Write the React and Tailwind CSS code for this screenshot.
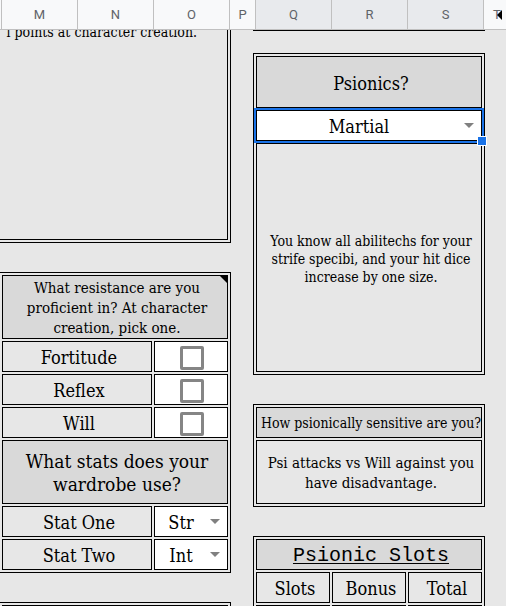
import React from "react";

const cell = "border border-black flex items-center justify-center text-center pl-1 pt-[2px]";
const panel = "border border-black p-[2px] grid grid-cols-3 gap-[2px]";
const slotHead = "border border-black p-0 pl-1 pt-[2px] font-normal leading-6";

const columns = [
  { name: "M" },
  { name: "N" },
  { name: "O" },
  { name: "P" },
  { name: "Q", selected: true },
  { name: "R", selected: true },
  { name: "S", selected: true },
];

function ColumnHeader() {
  return (
    <header className="grid h-[30px] grid-cols-[2fr_76fr_76fr_76fr_26fr_76fr_76fr_76fr_22fr] border-b border-[#c0c0c0] bg-[#f8f9fa] font-['Roboto',sans-serif] text-[13px] text-[#5f6368]">
      <div className="border-r border-[#c0c0c0]" />
      {columns.map((c) => (
        <div
          key={c.name}
          className={`flex min-w-0 items-center justify-center border-r border-[#c0c0c0] ${c.selected ? "bg-[#e8eaed]" : ""}`}
        >
          {c.name}
        </div>
      ))}
      <div className="relative flex min-w-0 items-center pl-[9px]">
        T
        <svg className="absolute left-[13px] top-[10px] h-[10px] w-[6px]" viewBox="0 0 6 10" fill="#000">
          <path d="M5 0v10L0 5z" />
        </svg>
      </div>
    </header>
  );
}

function Arrow() {
  return (
    <svg className="pointer-events-none absolute right-[7px] top-3 h-[5px] w-[10px]" viewBox="0 0 10 5" fill="#808080">
      <path d="M0 0h10L5 5z" />
    </svg>
  );
}

function CheckRow({ id, label }) {
  return (
    <>
      <label htmlFor={id} className={`${cell} col-span-2 h-[31px] text-[18px]`}>{label}</label>
      <div className="flex h-[31px] items-center justify-center border border-black bg-white pl-px pt-[2px]">
        <input
          id={id}
          type="checkbox"
          className="h-6 w-6 appearance-none rounded-[2px] border-[3px] border-[#858585] bg-white checked:bg-[#858585]"
        />
      </div>
    </>
  );
}

function StatRow({ id, label, value }) {
  return (
    <>
      <label htmlFor={id} className={`${cell} col-span-2 h-[31px] text-[18px]`}>{label}</label>
      <div className="relative h-[31px] border border-black bg-white">
        <select id={id} defaultValue={value} className="h-full w-full appearance-none bg-transparent pr-5 pt-[2px] text-center text-[18px]">
          <option>Str</option>
          <option>Int</option>
        </select>
        <Arrow />
      </div>
    </>
  );
}

function LeftColumn() {
  return (
    <div className="min-w-0 overflow-hidden">
      <section className="border-b border-r border-black pb-[2px] pr-[2px]">
        <div className="flex h-[210px] justify-end overflow-hidden border-b border-r border-black pr-[30px]">
          <p className="-mt-2 whitespace-nowrap text-[14px] leading-5">l points at character creation.</p>
        </div>
      </section>

      <section className={`${panel} -ml-px mt-[29px]`}>
        <h2 className={`${cell} relative col-span-3 h-16 bg-[#d9d9d9] text-[15px] leading-5`}>
          What resistance are you<br />proficient in? At character<br />creation, pick one.
          <svg className="absolute right-0 top-0 h-[7px] w-[7px]" viewBox="0 0 7 7">
            <path d="M0 0h7v7z" />
          </svg>
        </h2>
        <CheckRow id="fortitude" label="Fortitude" />
        <CheckRow id="reflex" label="Reflex" />
        <CheckRow id="will" label="Will" />
        <h2 className={`${cell} col-span-3 h-16 bg-[#d9d9d9] text-[19px] leading-[23px]`}>
          What stats does your<br />wardrobe use?
        </h2>
        <StatRow id="stat-one" label="Stat One" value="Str" />
        <StatRow id="stat-two" label="Stat Two" value="Int" />
      </section>

      <section className={`${panel} -ml-px mt-[29px]`}>
        <div className={`${cell} col-span-3 h-16 bg-[#d9d9d9]`} />
      </section>
    </div>
  );
}

function RightColumn() {
  return (
    <div className="min-w-0">
      <div className="h-px bg-black" />

      <section className={`${panel} mt-[22px]`}>
        <h2 className={`${cell} col-span-3 h-[52px] bg-[#d9d9d9] text-[18px]`}>
          <label htmlFor="psionics">Psionics?</label>
        </h2>
        <div className="relative z-10 col-span-3 h-[31px] border border-black bg-white outline-2 outline-[#1a73e8]">
          <select id="psionics" defaultValue="Martial" className="h-full w-full appearance-none bg-transparent pr-5 pt-[2px] text-center text-[18px] outline-none">
            <option>Martial</option>
          </select>
          <Arrow />
          <span className="absolute -bottom-[6px] -right-[6px] h-[10px] w-[10px] border border-white bg-[#1a73e8]" />
        </div>
        <p className={`${cell} col-span-3 h-[229px] whitespace-nowrap text-[14px] leading-[18px]`}>
          You know all abilitechs for your<br />strife specibi, and your hit dice<br />increase by one size.
        </p>
      </section>

      <section className={`${panel} mt-[29px]`}>
        <h2 className={`${cell} col-span-3 h-[31px] whitespace-nowrap bg-[#d9d9d9] text-[14px]`}>
          How psionically sensitive are you?
        </h2>
        <p className={`${cell} col-span-3 h-16 whitespace-nowrap text-[15px] leading-5`}>
          Psi attacks vs Will against you<br />have disadvantage.
        </p>
      </section>

      <table className="mt-[29px] w-full table-fixed border-separate border-spacing-[2px] border border-black text-[18px]">
        <thead>
          <tr className="h-[31px]">
            <th colSpan={3} className="border border-black bg-[#d9d9d9] p-0 pl-1 pt-[2px] font-['Courier_New','Liberation_Mono',monospace] text-[20px] font-normal leading-6 underline decoration-1 underline-offset-2">
              Psionic Slots
            </th>
          </tr>
          <tr className="h-[31px]">
            <th className={slotHead}>Slots</th>
            <th className={slotHead}>Bonus</th>
            <th className={slotHead}>Total</th>
          </tr>
        </thead>
        <tbody>
          <tr className="h-[31px]">
            <td className="border border-black" />
            <td className="border border-black bg-white" />
            <td className="border border-black" />
          </tr>
        </tbody>
      </table>
    </div>
  );
}

export default function App() {
  return (
    <div className="h-screen overflow-hidden bg-[#e7e7e7] font-['DejaVu_Serif_Condensed','DejaVu_Serif',serif] text-black">
      <ColumnHeader />
      <main className="grid grid-cols-[231fr_22fr_232fr_21fr]">
        <LeftColumn />
        <div />
        <RightColumn />
        <div />
      </main>
    </div>
  );
}
